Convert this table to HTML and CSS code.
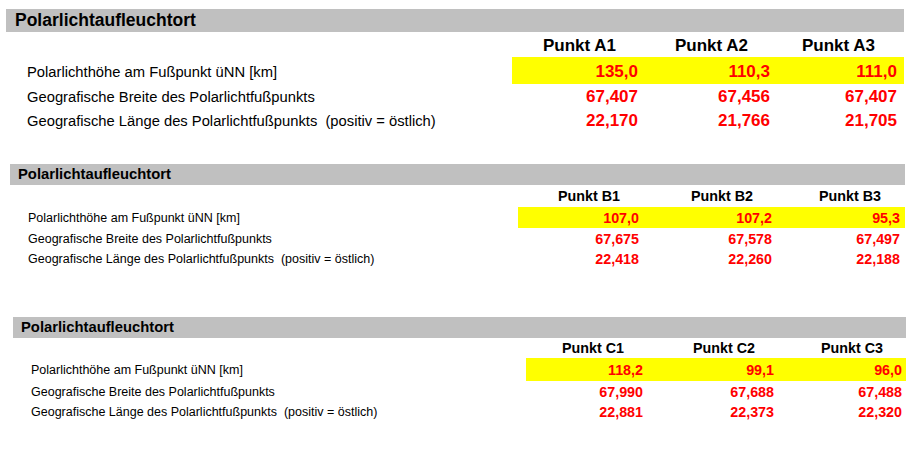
FILE: index.html
```html
<!DOCTYPE html>
<html lang="de">
<head>
<meta charset="utf-8">
<title>Polarlichtaufleuchtort</title>
<link rel="stylesheet" href="styles.css">
</head>
<body>
<section class="block block-a">
  <h2 class="bar">Polarlichtaufleuchtort</h2>
  <div class="grid">
    <div class="lbl"></div>
    <div class="hd">Punkt A1</div>
    <div class="hd">Punkt A2</div>
    <div class="hd">Punkt A3</div>

    <div class="lbl r1">Polarlichthöhe am Fußpunkt üNN [km]</div>
    <div class="val r1 hi">135,0</div>
    <div class="val r1 hi">110,3</div>
    <div class="val r1 hi">111,0</div>

    <div class="lbl">Geografische Breite des Polarlichtfußpunkts</div>
    <div class="val">67,407</div>
    <div class="val">67,456</div>
    <div class="val">67,407</div>

    <div class="lbl">Geografische Länge des Polarlichtfußpunkts  (positiv = östlich)</div>
    <div class="val">22,170</div>
    <div class="val">21,766</div>
    <div class="val">21,705</div>
  </div>
</section>

<section class="block block-b">
  <h2 class="bar">Polarlichtaufleuchtort</h2>
  <div class="grid">
    <div class="lbl"></div>
    <div class="hd">Punkt B1</div>
    <div class="hd">Punkt B2</div>
    <div class="hd">Punkt B3</div>

    <div class="lbl">Polarlichthöhe am Fußpunkt üNN [km]</div>
    <div class="val hi">107,0</div>
    <div class="val hi">107,2</div>
    <div class="val hi">95,3</div>

    <div class="lbl">Geografische Breite des Polarlichtfußpunkts</div>
    <div class="val">67,675</div>
    <div class="val">67,578</div>
    <div class="val">67,497</div>

    <div class="lbl">Geografische Länge des Polarlichtfußpunkts  (positiv = östlich)</div>
    <div class="val">22,418</div>
    <div class="val">22,260</div>
    <div class="val">22,188</div>
  </div>
</section>

<section class="block block-c">
  <h2 class="bar">Polarlichtaufleuchtort</h2>
  <div class="grid">
    <div class="lbl"></div>
    <div class="hd">Punkt C1</div>
    <div class="hd">Punkt C2</div>
    <div class="hd">Punkt C3</div>

    <div class="lbl">Polarlichthöhe am Fußpunkt üNN [km]</div>
    <div class="val hi">118,2</div>
    <div class="val hi">99,1</div>
    <div class="val hi">96,0</div>

    <div class="lbl">Geografische Breite des Polarlichtfußpunkts</div>
    <div class="val">67,990</div>
    <div class="val">67,688</div>
    <div class="val">67,488</div>

    <div class="lbl">Geografische Länge des Polarlichtfußpunkts  (positiv = östlich)</div>
    <div class="val">22,881</div>
    <div class="val">22,373</div>
    <div class="val">22,320</div>
  </div>
</section>
</body>
</html>
```

FILE: styles.css
```css
html, body {
  margin: 0;
  padding: 0;
  background: #ffffff;
}

body {
  font-family: "Liberation Sans", Arial, sans-serif;
  color: #000000;
  width: 922px;
  height: 456px;
  overflow: hidden;
}

.block {
  display: flex;
  flex-direction: column;
}

.bar {
  margin: 0;
  background: #c0c0c0;
  font-weight: bold;
  color: #000;
  white-space: nowrap;
}

.grid {
  display: grid;
  align-items: stretch;
}

.lbl {
  white-space: pre;
  display: flex;
  align-items: center;
}

.hd {
  font-weight: bold;
  text-align: right;
  white-space: nowrap;
  display: flex;
  align-items: center;
  justify-content: flex-end;
}

.val {
  font-weight: bold;
  color: #ff0000;
  text-align: right;
  white-space: nowrap;
  display: flex;
  align-items: center;
  justify-content: flex-end;
}

.hi {
  background: #ffff00;
}

/* ---------- Section A ---------- */
.block-a {
  margin: 9px 0 0 6px;
  width: 898px;
}

.block-a .bar {
  height: 23px;
  line-height: 23px;
  font-size: 17.5px;
  padding-left: 9px;
}

.block-a .grid {
  grid-template-columns: 506px 133px 132px 127px;
  grid-template-rows: 25px 27px 26px 21px;
}

.block-a .lbl {
  font-size: 14.75px;
  padding-left: 21px;
}

.block-a .hd {
  font-size: 17px;
  padding-right: 29px;
  padding-top: 3px;
  padding-bottom: 0;
}

.block-a .val {
  font-size: 17px;
  padding-right: 7px;
}

.block-a .r1 {
  padding-top: 3px;
}

/* ---------- Section B ---------- */
.block-b {
  margin: 33px 0 0 10px;
  width: 895px;
}

.block-b .bar {
  height: 21px;
  line-height: 21px;
  font-size: 14.8px;
  padding-left: 8px;
}

.block-b .grid {
  grid-template-columns: 508px 126px 133px 128px;
  grid-template-rows: 22px 21px 22px 18px;
}

.block-b .lbl {
  font-size: 12.5px;
  padding-left: 18px;
}

.block-b .hd {
  font-size: 14.3px;
  padding-right: 24px;
}

.block-b .val {
  font-size: 14.3px;
  padding-right: 5px;
}

/* ---------- Section C ---------- */
.block-c {
  margin: 49px 0 0 13px;
  width: 893px;
}

.block-c .bar {
  height: 21px;
  line-height: 21px;
  font-size: 14.8px;
  padding-left: 8px;
}

.block-c .grid {
  grid-template-columns: 513px 121px 131px 128px;
  grid-template-rows: 20px 23px 22px 18px;
}

.block-c .lbl {
  font-size: 12.5px;
  padding-left: 18px;
}

.block-c .hd {
  font-size: 14.3px;
  padding-right: 23px;
}

.block-c .val {
  font-size: 14.3px;
  padding-right: 4px;
}
```
